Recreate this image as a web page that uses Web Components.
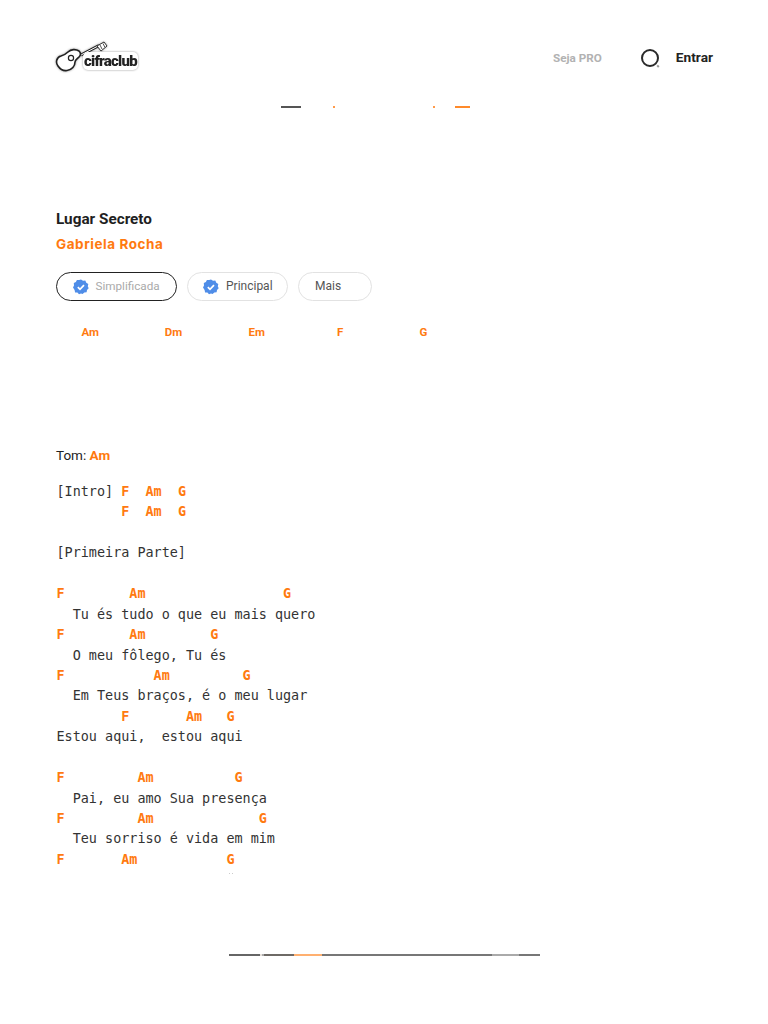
<!DOCTYPE html>
<html lang="pt-BR">
<head>
<meta charset="utf-8">
<title>Lugar Secreto - Gabriela Rocha</title>
<style>
    html, body { margin: 0; background: #fff; }
    body { font-family: Roboto, "Liberation Sans", sans-serif; width: 768px; height: 1024px; overflow: hidden; }
</style>
</head>
<body>
<site-header></site-header>
<clip-strip gap="0" left="281" segments="20:#555,32:transparent,2:#ff9a4a,98:transparent,2:#ff9a4a,20:transparent,15:#ff8a2a"></clip-strip>
<song-head title="Lugar Secreto" artist="Gabriela Rocha"></song-head>
<version-tabs>
    <version-pill active verified>Simplificada</version-pill>
    <version-pill verified>Principal</version-pill>
    <version-pill more>Mais</version-pill>
</version-tabs>
<chord-row>
    <span>Am</span><span>Dm</span><span>Em</span><span>F</span><span>G</span>
</chord-row>
<song-key>Am</song-key>
<song-tab>[Intro] <c-d>F</c-d>  <c-d>Am</c-d>  <c-d>G</c-d>
        <c-d>F</c-d>  <c-d>Am</c-d>  <c-d>G</c-d>

[Primeira Parte]

<c-d>F</c-d>        <c-d>Am</c-d>                 <c-d>G</c-d>
  Tu és tudo o que eu mais quero
<c-d>F</c-d>        <c-d>Am</c-d>        <c-d>G</c-d>
  O meu fôlego, Tu és
<c-d>F</c-d>           <c-d>Am</c-d>         <c-d>G</c-d>
  Em Teus braços, é o meu lugar
        <c-d>F</c-d>       <c-d>Am</c-d>   <c-d>G</c-d>
Estou aqui,  estou aqui

<c-d>F</c-d>         <c-d>Am</c-d>          <c-d>G</c-d>
  Pai, eu amo Sua presença
<c-d>F</c-d>         <c-d>Am</c-d>             <c-d>G</c-d>
  Teu sorriso é vida em mim
<c-d>F</c-d>       <c-d>Am</c-d>           <c-d>G</c-d></song-tab>
<clip-strip gap="0" left="229" thick="1" segments="1:#ccc,2:transparent,1:#ccc"></clip-strip>
<clip-strip gap="80" left="229" segments="31:#666,2:#e6e0da,2:#aaa,30:#6e6a66,28:#ffb070,170:#777,27:#aaa,21:#777"></clip-strip>

<script>
const mono = `"DejaVu Sans Mono", "Liberation Mono", monospace`;

class SiteHeader extends HTMLElement {
    constructor() {
        super();
        this.attachShadow({ mode: "open" });
    }
    connectedCallback() {
        this.shadowRoot.innerHTML = `
            <style>
                :host {
                    display: flex;
                    align-items: center;
                    height: 106px;
                    box-sizing: border-box;
                    padding: 10px 55px 0 55px;
                }
                .logo {
                    position: relative;
                    width: 84px;
                    height: 36px;
                    filter: drop-shadow(0 0 1px #999);
                }
                .logo svg { display: block; }
                /* wordmark sits over the guitar body */
                .logo span {
                    position: absolute;
                    left: 28px;
                    top: 12px;
                    font: 900 15px/18px Roboto, sans-serif;
                    letter-spacing: -.75px;
                    color: #222;
                    background: #fff;
                    border-radius: 5px;
                    padding: 0 1px;
                }
                .pro {
                    margin-left: auto;
                    font-size: 11.7px;
                    font-weight: 700;
                    color: #b2b2b2;
                }
                .search { margin: 2px 0 0 37px; display: block; }
                .login {
                    margin-left: 13px;
                    font-size: 13.7px;
                    font-weight: 700;
                    color: #222;
                    position: relative;
                    top: -1px;
                }
            </style>
            <div class="logo">
                <svg width="84" height="36" viewBox="0 0 84 36" fill="none">
                    <path d="M26 15L44 5.5" stroke="#222" stroke-width="3"/>
                    <path d="M26 15L44 5.5" stroke="#fff" stroke-width="1"/>
                    <path d="M42 6L49 2l3 4-6 5z" fill="#fff" stroke="#333" stroke-width="1"/>
                    <path d="M45 5l2 4M48 3.5l2 4" stroke="#555" stroke-width="1"/>
                    <path d="M3 26C0 22 2 17 6 16C9 15 11 14 13 12C16 9 21 9 24 11C26 13 26 15 24 17C22 19 20 20 20 22C20 26 17 30 12 30.5C8 31 5 29 3 26Z" fill="#fff" stroke="#222" stroke-width="1.6"/>
                    <circle cx="16" cy="18" r="2.6" stroke="#222" stroke-width="1.2"/>
                </svg>
                <span>cifraclub</span>
            </div>
            <span class="pro">Seja PRO</span>
            <svg class="search" width="24" height="24" viewBox="0 0 24 24" fill="none">
                <circle cx="11" cy="11" r="8" stroke="#2a2a2a" stroke-width="2"/>
                <path d="M18.2 18.4l1.6 1.6" stroke="#999" stroke-width="2"/>
            </svg>
            <span class="login">Entrar</span>
        `;
    }
}
customElements.define("site-header", SiteHeader);

// thin slice of cut off content, a row of coloured segments
class ClipStrip extends HTMLElement {
    constructor() {
        super();
        this.attachShadow({ mode: "open" });
    }
    connectedCallback() {
        const segs = (this.getAttribute("segments") ?? "").split(",").map((s) => {
            const [w, c] = s.split(":");
            return `<i style="width:${w}px;background:${c}"></i>`;
        }).join("");
        this.shadowRoot.innerHTML = `
            <style>
                :host {
                    display: flex;
                    height: ${this.getAttribute("thick") ?? 2}px;
                    margin-top: ${this.getAttribute("gap")}px;
                    margin-left: ${this.getAttribute("left")}px;
                }
                i { display: block; height: 100%; }
            </style>
            ${segs}
        `;
    }
}
customElements.define("clip-strip", ClipStrip);

class SongHead extends HTMLElement {
    constructor() {
        super();
        this.attachShadow({ mode: "open" });
    }
    connectedCallback() {
        this.shadowRoot.innerHTML = `
            <style>
                :host {
                    display: block;
                    margin: 101px 0 0 56px;
                }
                h1 {
                    margin: 0;
                    font: 700 15.3px/20px Roboto, sans-serif;
                    color: #1f1f1f;
                }
                h2 {
                    margin: 5px 0 0;
                    font: 700 13.5px/20px Inter, sans-serif;
                    letter-spacing: .55px;
                    color: #ff7a10;
                }
            </style>
            <h1>${this.getAttribute("title")}</h1>
            <h2>${this.getAttribute("artist")}</h2>
        `;
    }
}
customElements.define("song-head", SongHead);

class VersionTabs extends HTMLElement {
    constructor() {
        super();
        this.attachShadow({ mode: "open" });
        this.shadowRoot.innerHTML = `
            <style>
                :host {
                    display: flex;
                    gap: 10px;
                    margin: 18px 0 0 56px;
                }
            </style>
            <slot></slot>
        `;
    }
}
customElements.define("version-tabs", VersionTabs);

class VersionPill extends HTMLElement {
    constructor() {
        super();
        this.attachShadow({ mode: "open" });
    }
    connectedCallback() {
        const badge = this.hasAttribute("verified") ? `
            <svg width="16" height="16" viewBox="0 0 16 16">
                <path d="M8 .5l2 1.3 2.3-.2 1 2.1 2 1.2-.5 2.3.9 2.1-1.7 1.6-.4 2.3-2.3.3L9.6 15l-1.6-.6-2 .9-1.6-1.7-2.3-.2-.5-2.3L0 8.5l1-2.1L.8 4l2.1-1 1-2.1 2.3.2z" fill="#4f8de8"/>
                <path d="M4.8 8.2l2.2 2.2 4-4.2" fill="none" stroke="#fff" stroke-width="1.7"/>
            </svg>` : "";
        this.shadowRoot.innerHTML = `
            <style>
                :host {
                    display: flex;
                    align-items: center;
                    gap: 7px;
                    height: 29px;
                    box-sizing: border-box;
                    border: 1px solid #e2e2e2;
                    border-radius: 15px;
                    padding: 0 0 2px 15px;
                    font: 400 12px Roboto, sans-serif;
                    color: #555;
                    width: 101px;
                }
                :host([active]) {
                    border: 1.5px solid #222;
                    color: #aaa;
                    width: 121px;
                    padding-left: 15.5px;
                    font-size: 11.7px;
                }
                :host([more]) { width: 74px; padding-left: 16px; }
                svg { display: block; flex: none; margin-top: 2px; }
            </style>
            ${badge}<slot></slot>
        `;
    }
}
customElements.define("version-pill", VersionPill);

class ChordRow extends HTMLElement {
    constructor() {
        super();
        this.attachShadow({ mode: "open" });
        this.shadowRoot.innerHTML = `
            <style>
                :host {
                    display: grid;
                    grid-template-columns: repeat(5, 83.3px);
                    justify-items: center;
                    margin: 23px 0 0 48.5px;
                    font: 700 11.5px/16px Roboto, sans-serif;
                    color: #ff7a10;
                }
            </style>
            <slot></slot>
        `;
    }
}
customElements.define("chord-row", ChordRow);

class SongKey extends HTMLElement {
    constructor() {
        super();
        this.attachShadow({ mode: "open" });
        this.shadowRoot.innerHTML = `
            <style>
                :host {
                    display: block;
                    margin: 106px 0 0 56px;
                    font: 400 13.5px/18px Roboto, sans-serif;
                    color: #222;
                }
                b { color: #ff7a10; }
            </style>
            Tom: <b><slot></slot></b>
        `;
    }
}
customElements.define("song-key", SongKey);

// the shadow markup here has no spaces around it, the host is white-space: pre
class SongTab extends HTMLElement {
    constructor() {
        super();
        this.attachShadow({ mode: "open" });
        this.shadowRoot.innerHTML = `<style>
            :host {
                display: block;
                margin: 18px 0 0 56.5px;
                height: 391px;
                overflow: hidden;
                white-space: pre;
                font: 400 13.45px/20.44px ${mono};
                color: #333;
            }
        </style><slot></slot>`;
    }
}
customElements.define("song-tab", SongTab);

class ChordName extends HTMLElement {
    constructor() {
        super();
        this.attachShadow({ mode: "open" });
        this.shadowRoot.innerHTML = `<style>:host { display: inline; font-weight: 700; color: #ff7a10; }</style><slot></slot>`;
    }
}
customElements.define("c-d", ChordName);
</script>
</body>
</html>
